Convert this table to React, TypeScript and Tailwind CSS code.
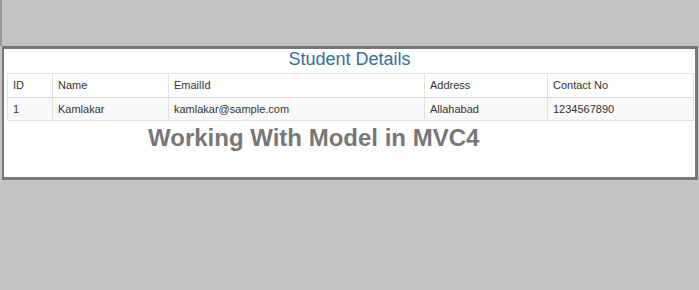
import React from 'react';

type Student = {
  id: number;
  name: string;
  email: string;
  address: string;
  contact: string;
};

const students: Student[] = [
  { id: 1, name: 'Kamlakar', email: 'kamlakar@sample.com', address: 'Allahabad', contact: '1234567890' },
];

const columns = [
  { label: 'ID', w: 'w-[45px]' },
  { label: 'Name', w: 'w-[116px]' },
  { label: 'EmailId', w: 'w-[256px]' },
  { label: 'Address', w: 'w-[123px]' },
  { label: 'Contact No', w: '' },
];

export default function App() {
  return (
    <div className="w-[699px] h-[290px] bg-[#c3c3c3] font-['Liberation_Sans',Arial,sans-serif]">
      {/* window edge above the panel */}
      <div className="h-[46px] border-l-2 border-[#9a9a9a]" />

      <div className="w-[696px] h-[134px] ml-[2px] bg-white border-[3px] border-[#787878] border-l-2">
        {/* Header */}
        <h3 className="text-center text-[18px] leading-[22px] text-[#31709f] -mt-[1px] mb-[3px]">
          Student Details
        </h3>

        {/* Students table */}
        <div className="px-[3px]">
          <table className="w-[687px] table-fixed border-collapse text-[11px] text-[#333]">
            <thead>
              <tr className="h-[24px]">
                {columns.map((c) => (
                  <th
                    key={c.label}
                    className={`${c.w} border border-[#e2e2e2] border-b-[#d6d6d6] text-left font-normal px-[5px]`}
                  >
                    {c.label}
                  </th>
                ))}
              </tr>
            </thead>
            <tbody>
              {students.map((s) => (
                <tr key={s.id} className="h-[23px] bg-[#f9f9f9]">
                  <td className="border border-[#e2e2e2] px-[5px]">{s.id}</td>
                  <td className="border border-[#e2e2e2] px-[5px]">{s.name}</td>
                  <td className="border border-[#e2e2e2] px-[5px]">{s.email}</td>
                  <td className="border border-[#e2e2e2] px-[5px]">{s.address}</td>
                  <td className="border border-[#e2e2e2] px-[5px]">{s.contact}</td>
                </tr>
              ))}
            </tbody>
          </table>
        </div>

        <h2 className="pl-[144px] mt-[2px] text-[24px] leading-[30px] font-bold text-[#777]">
          Working With Model in MVC4
        </h2>
      </div>
    </div>
  );
}
